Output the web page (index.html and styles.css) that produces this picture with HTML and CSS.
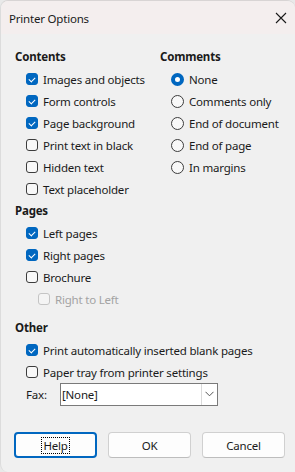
FILE: index.html
```
<!DOCTYPE html>
<html>
<head>
<meta charset="utf-8">
<link rel="stylesheet" href="styles.css">
</head>
<body>
<div class="window">
  <div class="titlebar">
    <span class="title">Printer Options</span>
    <svg class="close" width="12" height="12" viewBox="0 0 12 12"><path d="M1 1 L11 11 M11 1 L1 11" stroke="#1a1a1a" stroke-width="1.1" fill="none"/></svg>
  </div>
  <div class="content">
    <div class="cols">
      <div class="col left">
        <div class="heading">Contents</div>
        <div class="row"><span class="cb on"></span><span>Images and objects</span></div>
        <div class="row"><span class="cb on"></span><span>Form controls</span></div>
        <div class="row"><span class="cb on"></span><span>Page background</span></div>
        <div class="row"><span class="cb"></span><span>Print text in black</span></div>
        <div class="row"><span class="cb"></span><span>Hidden text</span></div>
        <div class="row"><span class="cb"></span><span>Text placeholder</span></div>
      </div>
      <div class="col right">
        <div class="heading">Comments</div>
        <div class="row"><span class="rb on"></span><span>None</span></div>
        <div class="row"><span class="rb"></span><span>Comments only</span></div>
        <div class="row"><span class="rb"></span><span>End of document</span></div>
        <div class="row"><span class="rb"></span><span>End of page</span></div>
        <div class="row"><span class="rb"></span><span>In margins</span></div>
      </div>
    </div>
    <div class="section">
      <div class="heading">Pages</div>
      <div class="row"><span class="cb on"></span><span>Left pages</span></div>
      <div class="row"><span class="cb on"></span><span>Right pages</span></div>
      <div class="row"><span class="cb"></span><span>Brochure</span></div>
      <div class="row sub disabled"><span class="cb"></span><span>Right to Left</span></div>
    </div>
    <div class="section other">
      <div class="heading">Other</div>
      <div class="row"><span class="cb on"></span><span>Print automatically inserted blank pages</span></div>
      <div class="row"><span class="cb"></span><span>Paper tray from printer settings</span></div>
      <div class="row fax">
        <span class="fax-label">Fax:</span>
        <div class="select">
          <span class="select-text">[None]</span>
          <span class="select-btn"><svg width="9" height="6" viewBox="0 0 9 6"><path d="M0.5 0.8 L4.5 4.8 L8.5 0.8" stroke="#555" stroke-width="1" fill="none"/></svg></span>
        </div>
      </div>
    </div>
  </div>
  <div class="buttons">
    <button class="btn default"><span class="focus">Help</span></button>
    <button class="btn">OK</button>
    <button class="btn">Cancel</button>
  </div>
</div>
</body>
</html>
```
FILE: styles.css
```
html, body {
  margin: 0;
  padding: 0;
  background: #e9e9e9;
}
body {
  font-family: "Noto Sans", "Open Sans", sans-serif;
  font-size: 11.5px;
  letter-spacing: -0.2px;
  color: #1a1a1a;
}
.window {
  width: 295px;
  height: 472px;
  background: #f0f0f0;
  border-radius: 8px 8px 0 8px;
  overflow: hidden;
  display: flex;
  flex-direction: column;
  box-sizing: border-box;
  border-top: 1px solid #d8d4d4;
  border-left: 1px solid #dcdcdc;
}
.titlebar {
  height: 33px;
  background: #f4eeee;
  display: flex;
  align-items: center;
  justify-content: space-between;
  padding: 0 8px 0 8px;
  flex-shrink: 0;
}
.title {
  font-size: 11.5px;
  padding-top: 1px;
}
.content {
  padding: 12px 0 0 14px;
}
.cols {
  display: flex;
}
.col.left {
  width: 145px;
}
.heading {
  height: 22px;
  line-height: 22px;
  font-weight: 700;
}
.row {
  height: 22px;
  display: flex;
  align-items: center;
  gap: 5px;
  padding-left: 11px;
}
.row.sub {
  padding-left: 23px;
}
.disabled {
  color: #a3a3a3;
}
.cb {
  width: 12px;
  height: 12px;
  box-sizing: border-box;
  border: 1px solid #3c3c3c;
  border-radius: 3px;
  background: #f8f8f8;
  flex-shrink: 0;
  position: relative;
}
.cb.on {
  background: #0067c0;
  border-color: #0067c0;
}
.cb.on::after {
  content: "";
  position: absolute;
  left: 3px;
  top: 1.5px;
  width: 3px;
  height: 5px;
  border: solid #fff;
  border-width: 0 1.2px 1.2px 0;
  transform: rotate(45deg);
}
.disabled .cb {
  border-color: #c4c4c4;
  background: #f4f4f4;
}
.rb {
  width: 13px;
  height: 13px;
  box-sizing: border-box;
  border: 1px solid #3c3c3c;
  border-radius: 50%;
  background: #f8f8f8;
  flex-shrink: 0;
}
.rb.on {
  border: 4px solid #0067c0;
  background: #fff;
}
.section.other {
  margin-top: 7px;
}
.row.fax {
  gap: 0;
}
.fax-label {
  width: 34px;
}
.select {
  width: 158px;
  height: 23px;
  box-sizing: border-box;
  border: 1px solid #7a7a7a;
  background: #fff;
  display: flex;
  align-items: stretch;
}
.select-text {
  flex: 1;
  padding-left: 1px;
  line-height: 21px;
}
.select-btn {
  width: 15px;
  border-left: 1px solid #dadada;
  display: flex;
  align-items: center;
  justify-content: center;
}
.buttons {
  margin-top: auto;
  margin-bottom: 14px;
  display: flex;
  gap: 11px;
  padding-left: 13px;
}
.btn {
  width: 83px;
  height: 26px;
  box-sizing: border-box;
  border: 1px solid #d0d0d0;
  border-bottom-color: #bdbdbd;
  border-radius: 4px;
  background: #fdfdfd;
  font-family: inherit;
  font-size: 11.5px;
  letter-spacing: -0.2px;
  color: #1a1a1a;
  padding: 0;
}
.btn.default {
  border: 2px solid #0067c0;
}
.focus {
  outline: 1px dotted #000;
  padding: 0 1px;
}
```
